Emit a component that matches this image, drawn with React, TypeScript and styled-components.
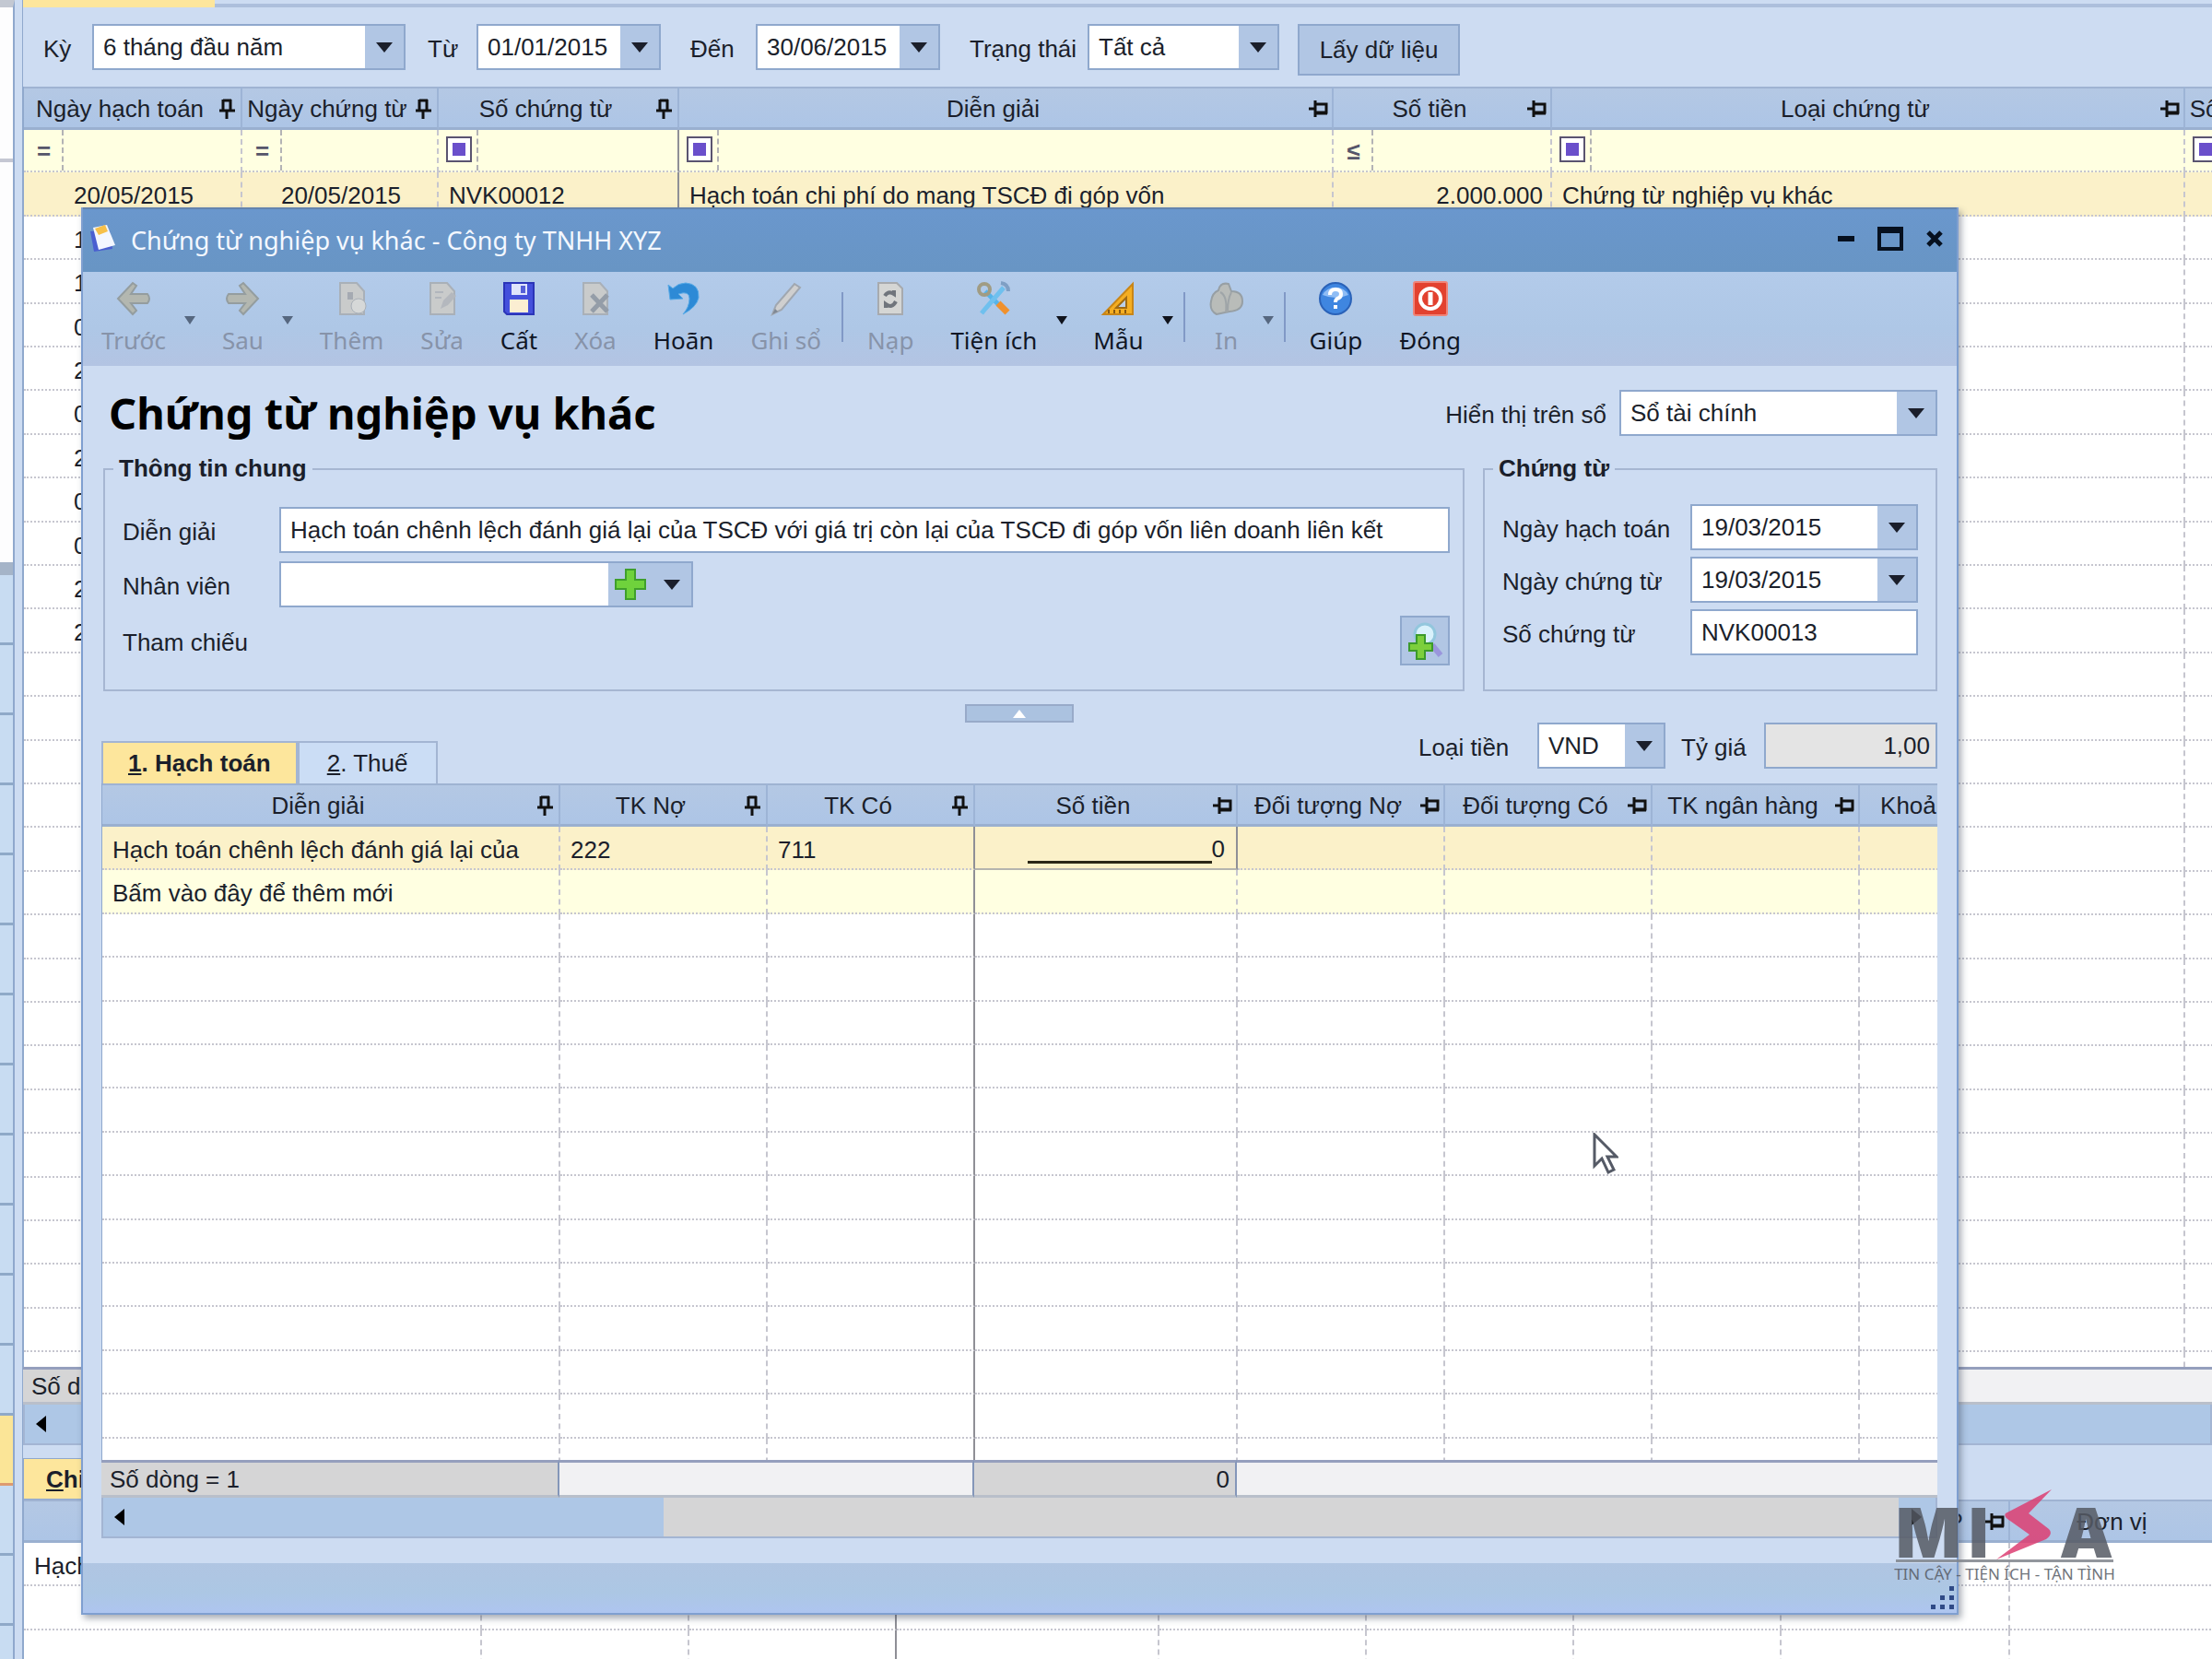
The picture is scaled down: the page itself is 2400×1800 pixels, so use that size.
import React from "react";
import styled, { createGlobalStyle, css } from "styled-components";

const c = {
  panel: "#cddcf2",
  line: "#8fa8cd",
  button: "#b1c6e4",
  tab: "#fde69c",
  selected: "#fbf1c9",
  entry: "#ffffe1",
  text: "#1b1f2b",
  grey: "#d5d5d6",
  dots: "#c6c6cf",
};

const sans = `"Liberation Sans", Arial, sans-serif`;
const ui = `"Noto Sans", "Open Sans", sans-serif`;

const Global = createGlobalStyle`
  * { box-sizing: border-box; }
  body { margin: 0; background: ${c.panel}; color: ${c.text}; font: 26px/28px ${sans}; }
  button, input, select { font: inherit; color: inherit; margin: 0; border-radius: 0; }
`;

/* ---------- page frame ---------- */

const Page = styled.div`
  position: relative;
  display: flex;
  height: 100vh;
  overflow: hidden;
`;

const Rail = styled.nav`
  width: 16px;
  margin-right: 8px;
  flex: none;
  display: flex;
  flex-direction: column;
  border-right: 2px solid ${c.line};
  border-top: 8px solid #c3c8d2;
  background: #fdfdfe;
`;

const RailList = styled.div`
  flex: 0 0 168px;
  border-bottom: 4px solid #c5c7d3;
`;

const RailSpace = styled.div`
  flex: 0 0 434px;
`;

const RailSplitter = styled.div`
  flex: 0 0 14px;
  background: #a5b4c8;
`;

const RailButton = styled.button<{ $active?: boolean }>`
  flex: 0 0 76px;
  padding: 0;
  border: 0;
  border-bottom: 3px solid ${(p) => (p.$active ? "#dd9a70" : "#8fa9c8")};
  background: ${(p) => (p.$active ? "#fbe597" : "#c8dcf2")};
`;

const Main = styled.main`
  flex: 1;
  min-width: 0;
  display: flex;
  flex-direction: column;
  border-left: 1px solid ${c.line};
`;

const TabStrip = styled.div`
  height: 8px;
  flex: none;
  display: flex;
`;

const TabStripActive = styled.div`
  width: 208px;
  background: ${c.tab};
`;

const TabStripRest = styled.div`
  flex: 1;
  border-bottom: 4px solid #adbfdc;
`;

const FilterBar = styled.form`
  flex: none;
  height: 86px;
  padding: 18px 22px 0;
  display: flex;
  align-items: flex-start;
`;

const FilterField = styled.div<{ $gap: number }>`
  display: flex;
  align-items: center;
  margin-left: ${(p) => p.$gap}px;
`;

const FieldLabel = styled.label<{ $w?: number }>`
  flex: none;
  width: ${(p) => (p.$w ? `${p.$w}px` : "auto")};
  padding-top: 3px;
  white-space: nowrap;
`;

const FetchButton = styled.button`
  height: 56px;
  width: 176px;
  margin-left: 20px;
  border: 2px solid ${c.line};
  background: ${c.button};
`;

/* ---------- inputs ---------- */

const ComboBox = styled.div<{ $w?: number }>`
  display: flex;
  height: 50px;
  width: ${(p) => (p.$w ? `${p.$w}px` : "100%")};
  border: 2px solid ${c.line};
  background: #fff;
`;

const fieldText = css`
  flex: 1;
  min-width: 0;
  padding: 0 10px;
  border: 0;
  outline: 0;
  background: transparent;
`;

const ComboSelect = styled.select`
  ${fieldText}
  appearance: none;
`;

const ComboInput = styled.input`
  ${fieldText}
`;

const ComboButton = styled.button`
  flex: none;
  width: 42px;
  padding: 0;
  border: 0;
  display: flex;
  align-items: center;
  justify-content: center;
  background: ${c.button};
`;

const AddButton = styled(ComboButton)`
  width: 48px;
`;

const TextField = styled.input<{ $w?: number; $locked?: boolean }>`
  height: 50px;
  width: ${(p) => (p.$w ? `${p.$w}px` : "100%")};
  padding: 0 ${(p) => (p.$locked ? 6 : 10)}px;
  border: 2px solid ${c.line};
  background: ${(p) => (p.$locked ? "#e4e4e4" : "#fff")};
  text-align: ${(p) => (p.$locked ? "right" : "left")};
`;

const Down = ({ small }: { small?: boolean }) => (
  <svg width={small ? 12 : 18} height={small ? 9 : 11} viewBox="0 0 18 11" preserveAspectRatio="none" aria-hidden>
    <path d="M0 0h18L9 11z" fill="currentColor" />
  </svg>
);

function SelectBox({ id, value, w }: { id: string; value: string; w?: number }) {
  return (
    <ComboBox $w={w}>
      <ComboSelect id={id} defaultValue={value}>
        <option>{value}</option>
      </ComboSelect>
      <ComboButton type="button" tabIndex={-1} aria-label="Mở danh sách"><Down /></ComboButton>
    </ComboBox>
  );
}

function DateBox({ id, value, w }: { id: string; value: string; w?: number }) {
  return (
    <ComboBox $w={w}>
      <ComboInput id={id} defaultValue={value} />
      <ComboButton type="button" aria-label="Chọn ngày"><Down /></ComboButton>
    </ComboBox>
  );
}

/* ---------- grids ---------- */

const GridArea = styled.div`
  flex: 1;
  min-height: 0;
  overflow: hidden;
  background: #fff;
  border-left: 1px solid ${c.line};
`;

const GridTable = styled.table<{ $w: number }>`
  width: ${(p) => p.$w}px;
  table-layout: fixed;
  border-collapse: separate;
  border-spacing: 0;
`;

const HeadCell = styled.th`
  height: 47px;
  padding: 2px 0 0;
  font-weight: normal;
  background: linear-gradient(#b4c8e4, #adc5e6);
  border-right: 2px solid #9db4d6;
  border-top: 2px solid #9fb3d2;
  border-bottom: 3px solid #9ab0d0;
`;

const HeadContent = styled.div`
  display: flex;
  align-items: center;
  padding-right: 3px;
  white-space: nowrap;
`;

const HeadLabel = styled.span`
  flex: 1;
  text-align: center;
`;

const Cell = styled.td<{ $align?: string; $wall?: boolean; $active?: boolean }>`
  padding: 4px 8px 0 11px;
  overflow: hidden;
  white-space: nowrap;
  text-align: ${(p) => p.$align ?? "left"};
  border-right: 2px ${(p) => (p.$wall || p.$active ? "solid #8f8f96" : `dashed ${c.dots}`)};
  border-bottom: 2px ${(p) => (p.$active ? "solid #b5b5ae" : `dotted ${c.dots}`)};
`;

const Row = styled.tr<{ $tone?: string }>`
  height: 47px;
  background: ${(p) => p.$tone ?? "#fff"};
  &:nth-child(5n + 2), &:nth-child(5n + 4) { height: 48px; }
`;

const FilterCell = styled.td<{ $wall?: boolean }>`
  height: 46px;
  padding: 0;
  background: ${c.entry};
  border-right: 2px ${(p) => (p.$wall ? "solid #8f8f96" : `dashed ${c.dots}`)};
  border-bottom: 2px dotted ${c.dots};
`;

const FilterSlot = styled.div`
  display: flex;
  height: 44px;
`;

const Operator = styled.button`
  flex: none;
  width: 43px;
  padding: 2px 0 0 2px;
  border: 0;
  border-right: 2px dashed #b3b3b5;
  background: transparent;
  font-weight: bold;
  color: #55556a;
`;

const FilterInput = styled.input`
  flex: 1;
  min-width: 0;
  border: 0;
  background: transparent;
`;

const SumCell = styled.td<{ $filled?: boolean; $line?: boolean; $wall?: boolean }>`
  height: 41px;
  padding: 0 6px 0 9px;
  overflow: hidden;
  white-space: nowrap;
  text-align: ${(p) => (p.$line ? "right" : "left")};
  background: ${(p) => (p.$filled ? c.grey : "#f1f1f3")};
  border-top: 3px solid #959fbd;
  border-bottom: 3px solid #b9bfca;
  border-right: ${(p) => (p.$filled || p.$wall ? "2px solid #8496b9" : "0")};
`;

const ScrollBar = styled.div`
  flex: none;
  display: flex;
  align-items: center;
  height: 44px;
  padding: 0 12px;
  background: #aec7e6;
  border: 2px solid #a3b5d3;
  border-top: 0;
`;

const ScrollButton = styled.button`
  padding: 0;
  width: 14px;
  border: 0;
  display: flex;
  background: transparent;
  color: #000;
`;

const ScrollTrack = styled.div`
  flex: 1;
  align-self: stretch;
  padding: 0 14px 0 582px;
`;

const ScrollThumb = styled.div`
  height: 100%;
  background: ${c.grey};
`;

const Pin = ({ side }: { side?: boolean }) => (
  <svg width="24" height="24" viewBox="0 0 24 24" fill="none" stroke="#111" aria-hidden>
    {side ? (
      <path d="M2 12h7M9 3v18M9 7h12v9H9M9 17h13" strokeWidth="3" />
    ) : (
      <path d="M8 2v11M8 3h9M16 2v11M4 14h17M12 14v9" strokeWidth="3" />
    )}
  </svg>
);

const Square = () => (
  <svg width="28" height="28" viewBox="0 0 28 28" aria-hidden>
    <rect x="1" y="1" width="26" height="26" fill="#fff" stroke="#5a5470" strokeWidth="2" />
    <rect x="7" y="7" width="14" height="14" fill="#6a4fcb" />
  </svg>
);

const LeftArrow = () => (
  <svg width="12" height="18" viewBox="0 0 12 18" aria-hidden><path d="M11 0v18L0 9z" fill="currentColor" /></svg>
);
const RightArrow = () => (
  <svg width="12" height="18" viewBox="0 0 12 18" aria-hidden><path d="M0 0v18l11-9z" fill="currentColor" /></svg>
);

type Col = { name: string; w: number; pinned?: boolean; wall?: boolean; op?: string };

const total = (cols: Col[]) => cols.reduce((sum, col) => sum + col.w, 0);

function Columns({ cols }: { cols: Col[] }) {
  return <colgroup>{cols.map((col) => <col key={col.name} width={col.w} />)}</colgroup>;
}

function Head({ cols }: { cols: Col[] }) {
  return (
    <thead>
      <tr>
        {cols.map((col) => (
          <HeadCell key={col.name} scope="col">
            <HeadContent>
              <HeadLabel>{col.name}</HeadLabel>
              <Pin side={!col.pinned} />
            </HeadContent>
          </HeadCell>
        ))}
      </tr>
    </thead>
  );
}

function EmptyRows({ cols, count }: { cols: Col[]; count: number }) {
  return (
    <>
      {Array.from({ length: count }, (_, i) => (
        <Row key={i}>{cols.map((col) => <Cell key={col.name} $wall={col.wall} />)}</Row>
      ))}
    </>
  );
}

/* ---------- voucher list ---------- */

const listCols: Col[] = [
  { name: "Ngày hạch toán", w: 237, pinned: true, op: "=" },
  { name: "Ngày chứng từ", w: 213, pinned: true, op: "=" },
  { name: "Số chứng từ", w: 261, pinned: true, wall: true, op: "box" },
  { name: "Diễn giải", w: 710, op: "box" },
  { name: "Số tiền", w: 237, op: "≤" },
  { name: "Loại chứng từ", w: 687, op: "box" },
  { name: "Số hóa đơn", w: 174, op: "box" },
];

const olderDates = [
  "19/03/2015", "19/03/2015", "05/03/2015", "28/02/2015", "05/02/2015",
  "28/01/2015", "05/01/2015", "05/01/2015", "20/01/2015", "20/01/2015",
];

function VoucherList() {
  return (
    <GridArea>
      <GridTable $w={total(listCols)}>
        <Columns cols={listCols} />
        <Head cols={listCols} />
        <tbody>
          <tr>
            {listCols.map((col) => (
              <FilterCell key={col.name} $wall={col.wall}>
                <FilterSlot>
                  <Operator type="button" aria-label={`Điều kiện lọc ${col.name}`}>
                    {col.op === "box" ? <Square /> : col.op}
                  </Operator>
                  <FilterInput aria-label={`Lọc ${col.name}`} />
                </FilterSlot>
              </FilterCell>
            ))}
          </tr>
          <Row $tone={c.selected}>
            <Cell $align="center">20/05/2015</Cell>
            <Cell $align="center">20/05/2015</Cell>
            <Cell $wall>NVK00012</Cell>
            <Cell>Hạch toán chi phí do mang TSCĐ đi góp vốn</Cell>
            <Cell $align="right">2.000.000</Cell>
            <Cell>Chứng từ nghiệp vụ khác</Cell>
            <Cell />
          </Row>
          {olderDates.map((date, i) => (
            <Row key={i}>
              <Cell $align="center">{date}</Cell>
              {listCols.slice(1).map((col) => <Cell key={col.name} $wall={col.wall} />)}
            </Row>
          ))}
          <EmptyRows cols={listCols} count={20} />
        </tbody>
      </GridTable>
    </GridArea>
  );
}

const Clip = styled.div`
  flex: none;
  overflow: hidden;
`;

/* ---------- detail pane ---------- */

const DetailPane = styled.section`
  flex: 0 0 232px;
  min-height: 0;
  padding-top: 14px;
  display: flex;
  flex-direction: column;
`;

const DetailTabs = styled.div`
  flex: none;
  height: 45px;
  display: flex;
`;

const DetailTab = styled.button`
  padding: 0 24px;
  border: 1px solid ${c.line};
  background: ${c.tab};
  font-weight: bold;
`;

const detailCols: Col[] = [
  { name: "Diễn giải", w: 497, pinned: true },
  { name: "TK Nợ", w: 225, pinned: true },
  { name: "TK Có", w: 225, pinned: true, wall: true },
  { name: "Số tiền", w: 285 },
  { name: "Đối tượng Nợ", w: 225 },
  { name: "Đối tượng Có", w: 225 },
  { name: "TK ngân hàng", w: 225 },
  { name: "Khoản mục CP", w: 248 },
  { name: "Đơn vị", w: 250 },
];

function Details() {
  return (
    <DetailPane>
      <DetailTabs>
        <DetailTab type="button"><u>C</u>hi tiết</DetailTab>
      </DetailTabs>
      <GridArea>
        <GridTable $w={total(detailCols)}>
          <Columns cols={detailCols} />
          <Head cols={detailCols} />
          <tbody>
            <Row>
              <Cell>Hạch toán chi phí do mang</Cell>
              {detailCols.slice(1).map((col) => <Cell key={col.name} $wall={col.wall} />)}
            </Row>
            <EmptyRows cols={detailCols} count={3} />
          </tbody>
        </GridTable>
      </GridArea>
    </DetailPane>
  );
}

/* ---------- dialog ---------- */

const Dialog = styled.section`
  position: absolute;
  inset: 225px 275px 48px 88px;
  display: flex;
  flex-direction: column;
  background: ${c.panel};
  border: 2px solid #7f9fd0;
  border-top: 0;
  box-shadow: 3px 4px 7px rgba(60, 70, 90, 0.45);
`;

const TitleBar = styled.header`
  flex: none;
  height: 70px;
  padding: 0 0 4px 6px;
  display: flex;
  align-items: center;
  background: linear-gradient(#6a97cd, #6895c4);
  border-top: 2px solid #6484ae;
`;

const TitleText = styled.span`
  flex: 1;
  padding: 4px 0 0 14px;
  color: #f4f8ff;
  font: 27px/36px ${ui};
`;

const WindowButton = styled.button`
  width: 48px;
  height: 40px;
  padding: 0;
  border: 0;
  display: flex;
  align-items: center;
  justify-content: center;
  background: transparent;
`;

const ToolBar = styled.div`
  flex: none;
  height: 102px;
  display: flex;
  background: linear-gradient(#b3cbea, #aec7e6 60%, #b3c4e3);
`;

const Tool = styled.button`
  padding: 10px 20px 0;
  border: 0;
  display: flex;
  flex-direction: column;
  align-items: center;
  gap: 8px;
  background: transparent;
  font: 26px/36px ${ui};
  white-space: nowrap;
  color: #101625;
  &:disabled { color: #8793a9; }
`;

const ToolMenu = styled.button`
  width: 21px;
  padding: 2px 8px 0 0;
  border: 0;
  display: flex;
  align-items: center;
  justify-content: center;
  background: transparent;
  color: #10131c;
  &:disabled { color: #56677f; }
`;

const ToolRule = styled.span`
  width: 2px;
  height: 54px;
  margin: 22px 6px 0 2px;
  background: #8199c6;
`;

const Body = styled.div`
  flex: 1;
  min-height: 0;
  padding: 26px 21px 27px 20px;
  display: flex;
  flex-direction: column;
`;

const TitleRow = styled.div`
  flex: none;
  display: flex;
  align-items: center;
  justify-content: space-between;
  gap: 12px;
`;

const Heading = styled.h1`
  margin: 0;
  padding-left: 8px;
  font: bold 47px/50px ${ui};
  color: #000;
`;

const Inline = styled.div`
  display: flex;
  align-items: center;
  gap: 14px;
`;

const Groups = styled.div`
  flex: none;
  display: grid;
  grid-template-columns: 1fr 493px;
  gap: 20px;
  padding: 22px 0 0 2px;
`;

const Group = styled.fieldset<{ $top: number }>`
  min-width: 0;
  height: 255px;
  margin: 0;
  padding: ${(p) => p.$top}px 14px 0 19px;
  border: 2px solid #a6b6d2;
`;

const Legend = styled.legend`
  margin-left: -10px;
  padding: 0 6px 2px;
  line-height: 26px;
  font-weight: bold;
`;

const GroupGrid = styled.div<{ $label: number; $gap: number }>`
  display: grid;
  grid-template-columns: ${(p) => p.$label}px 1fr;
  align-items: center;
  row-gap: ${(p) => p.$gap}px;
`;

const ReferenceButton = styled.button`
  justify-self: end;
  width: 54px;
  height: 54px;
  padding: 0;
  border: 2px solid ${c.line};
  display: flex;
  align-items: center;
  justify-content: center;
  background: ${c.button};
`;

const Collapse = styled.button`
  flex: none;
  align-self: center;
  width: 118px;
  height: 20px;
  margin-top: 14px;
  padding: 0;
  border: 2px solid #98aac9;
  display: flex;
  align-items: center;
  justify-content: center;
  background: #abc2e0;
`;

const TabRow = styled.div`
  flex: none;
  display: flex;
  justify-content: space-between;
  align-items: flex-end;
  height: 66px;
`;

const Tabs = styled.div`
  display: flex;
`;

const Tab = styled.button<{ $active?: boolean }>`
  height: 46px;
  min-width: 152px;
  padding: 0 27px;
  border: 2px solid #a3b5d3;
  border-bottom: 0;
  background: ${(p) => (p.$active ? c.tab : "#cbddf5")};
  font-weight: ${(p) => (p.$active ? "bold" : "normal")};
`;

const Currency = styled.div`
  align-self: flex-start;
  display: flex;
  align-items: center;
  gap: 17px;
`;

const ActiveValue = styled.div`
  display: flex;
  justify-content: flex-end;
`;

const MaskLine = styled.span`
  width: 200px;
  height: 30px;
  border-bottom: 3px solid #2b2717;
`;

const MaskDigit = styled.span`
  padding-right: 4px;
`;

const StatusBar = styled.footer`
  flex: none;
  height: 54px;
  display: flex;
  justify-content: flex-end;
  align-items: flex-end;
  padding: 0 2px 3px;
  background: linear-gradient(#b0c5e2, #acc7e4 60%, #aec5f0);
`;

const lineCols: Col[] = detailCols.slice(0, 8);

/* ---------- toolbar drawings ---------- */

const Ico = ({ children }: { children: React.ReactNode }) => (
  <svg width="38" height="38" viewBox="0 0 38 38" fill="none" aria-hidden>{children}</svg>
);

const paper = <path d="M6 2h18l8 9v25H6z" fill="#c9cbcb" stroke="#a9b0b8" strokeWidth="2" />;

const icons: Record<string, React.ReactNode> = {
  back: <Ico><path d="M2 19 18 2l4 3-6 9h18q4 5 0 10H16l6 8-4 4z" fill="#b3b7b0" stroke="#949d9f" strokeWidth="2" /></Ico>,
  next: <Ico><path d="M36 19 20 2l-4 3 6 9H4q-4 5 0 10h18l-6 8 4 4z" fill="#b3b7b0" stroke="#949d9f" strokeWidth="2" /></Ico>,
  add: <Ico>{paper}<path d="M14 12h6v8h-6z" fill="#a5aab2" /><circle cx="26" cy="27" r="8" fill="#d6d8d8" stroke="#a9b0b8" /></Ico>,
  edit: <Ico>{paper}<path d="M11 12h9M11 18h7" stroke="#b1b6bd" strokeWidth="2" /><path d="M17 30l3-9 9-9 5 4-9 10z" fill="#b4b8be" /></Ico>,
  save: (
    <Ico>
      <path d="M3 2h32v34H6l-3-3z" fill="#4450dc" stroke="#2b35b8" strokeWidth="2" />
      <path d="M11 3h17v12H11z" fill="#dfe4fb" /><path d="M21 5h5v8h-5z" fill="#5560d8" />
      <path d="M9 20h20v14H9z" fill="#fbeed2" />
    </Ico>
  ),
  remove: <Ico>{paper}<path d="m15 15 17 18M32 15 15 33" stroke="#949da8" strokeWidth="5" /></Ico>,
  undo: <Ico><path d="M2 4 4 20l14-1-5-5q12-4 12 5 0 9-7 17 15-8 17-18Q36 3 21 2 13 2 7 8z" fill="#2d8ad6" stroke="#56a9e6" /></Ico>,
  pencil: <Ico><path d="M4 36 8 26 28 3l6 4-20 24z" fill="#cfcfcf" stroke="#a0a7b0" strokeWidth="2" /><path d="m4 36 3-6 3 3z" fill="#7f8894" /></Ico>,
  reload: <Ico><path d="M6 2h20l6 6v28H6z" fill="#d5d6d4" stroke="#a7aaae" strokeWidth="2" /><path d="M13 16q4-6 10-2v-4M25 22q-4 8-11 3v4" stroke="#70757c" strokeWidth="4" /></Ico>,
  tools: (
    <Ico>
      <path d="m10 11 18 18" stroke="#56b4ea" strokeWidth="5" /><path d="m24 24 10 10" stroke="#f0912d" strokeWidth="7" />
      <path d="M30 7 10 30l-4 5" stroke="#6fc0ee" strokeWidth="5" /><path d="M27 2q8 1 8 9" stroke="#7f9fc4" strokeWidth="4" />
      <circle cx="9" cy="9" r="6" stroke="#a09c84" strokeWidth="4" />
    </Ico>
  ),
  ruler: <Ico><path d="M35 3v33H3z" fill="#f5ae22" stroke="#c98617" strokeWidth="2" /><path d="M28 18v11H17z" fill="#bcd0ea" stroke="#a06b14" strokeWidth="2" /><path d="M9 35v-4M15 35v-4M21 35v-4M27 35v-4" stroke="#8a5a10" strokeWidth="2" /></Ico>,
  print: <Ico><path d="M10 10q2-9 11-7l3 8q12 0 12 11 0 10-14 11L8 36q-8-4-6-14 1-9 8-12z" fill="#b9bcb9" stroke="#979fa4" strokeWidth="2" /><path d="M12 12q8 4 6 22M24 12q-4 8-4 20" stroke="#9fa5a8" strokeWidth="2" /></Ico>,
  help: (
    <Ico>
      <circle cx="19" cy="19" r="17" fill="#3f86e0" stroke="#2a62b8" strokeWidth="2" />
      <path d="M5 15a15 13 0 0 1 28 0q-14 6-28 0z" fill="#8fbdf5" />
      <path d="M13 15q0-6 6-6t6 5q0 4-4 5-2 1-2 4M19 26v4" stroke="#fff" strokeWidth="4" />
    </Ico>
  ),
  close: (
    <Ico>
      <rect x="1" y="1" width="36" height="36" rx="2" fill="#e2412f" stroke="#f08377" strokeWidth="2" />
      <circle cx="19" cy="19" r="11" stroke="#fff" strokeWidth="4" /><path d="M19 12v14" stroke="#fff" strokeWidth="5" />
    </Ico>
  ),
};

type ToolItem = { label: string; icon: string; off?: boolean; menu?: boolean; rule?: boolean };

const tools: ToolItem[] = [
  { label: "Trước", icon: "back", off: true, menu: true },
  { label: "Sau", icon: "next", off: true, menu: true },
  { label: "Thêm", icon: "add", off: true },
  { label: "Sửa", icon: "edit", off: true },
  { label: "Cất", icon: "save" },
  { label: "Xóa", icon: "remove", off: true },
  { label: "Hoãn", icon: "undo" },
  { label: "Ghi sổ", icon: "pencil", off: true, rule: true },
  { label: "Nạp", icon: "reload", off: true },
  { label: "Tiện ích", icon: "tools", menu: true },
  { label: "Mẫu", icon: "ruler", menu: true, rule: true },
  { label: "In", icon: "print", off: true, menu: true, rule: true },
  { label: "Giúp", icon: "help" },
  { label: "Đóng", icon: "close" },
];

const Plus = ({ size }: { size: number }) => (
  <svg width={size} height={size} viewBox="0 0 36 36" aria-hidden>
    <path d="M13 2h10v11h11v10H23v11H13V23H2V13h11z" fill="#6fd23c" stroke="#3f9f2c" strokeWidth="2" />
  </svg>
);

function EntryGrid() {
  return (
    <GridArea>
      <GridTable $w={total(lineCols)}>
        <Columns cols={lineCols} />
        <Head cols={lineCols} />
        <tbody>
          <Row $tone={c.selected}>
            <Cell>Hạch toán chênh lệch đánh giá lại của</Cell>
            <Cell>222</Cell>
            <Cell $wall>711</Cell>
            <Cell $active>
              <ActiveValue><MaskLine /><MaskDigit>0</MaskDigit></ActiveValue>
            </Cell>
            <Cell /><Cell /><Cell /><Cell />
          </Row>
          <Row $tone={c.entry}>
            <Cell>Bấm vào đây để thêm mới</Cell>
            {lineCols.slice(1).map((col) => <Cell key={col.name} $wall={col.wall} />)}
          </Row>
          <EmptyRows cols={lineCols} count={16} />
        </tbody>
      </GridTable>
    </GridArea>
  );
}

function VoucherDialog() {
  return (
    <Dialog role="dialog" aria-label="Chứng từ nghiệp vụ khác">
      <TitleBar>
        <svg width="32" height="36" viewBox="0 0 32 36" aria-hidden>
          <path d="M2 10 6 32l20-3-3-20z" fill="#4a5fd0" />
          <path d="M5 6 20 3l9 22-18 5z" fill="#f3f7ff" />
          <path d="m7 7 11-4 3 7-10 4z" fill="#f6c04a" />
        </svg>
        <TitleText>Chứng từ nghiệp vụ khác - Công ty TNHH XYZ</TitleText>
        <WindowButton aria-label="Thu nhỏ">
          <svg width="18" height="24" viewBox="0 0 18 24"><path d="M0 9h18v6H0z" fill="#06101f" /></svg>
        </WindowButton>
        <WindowButton aria-label="Phóng to">
          <svg width="28" height="26" viewBox="0 0 28 26"><path d="M2 2h24v22H2zM2 5h24" fill="none" stroke="#06101f" strokeWidth="4" /></svg>
        </WindowButton>
        <WindowButton aria-label="Đóng cửa sổ">
          <svg width="18" height="18" viewBox="0 0 18 18"><path d="m2 2 14 14M16 2 2 16" stroke="#06101f" strokeWidth="5" /></svg>
        </WindowButton>
      </TitleBar>

      <ToolBar role="toolbar">
        {tools.map((tool) => (
          <React.Fragment key={tool.label}>
            <Tool type="button" disabled={tool.off}>{icons[tool.icon]}{tool.label}</Tool>
            {tool.menu && (
              <ToolMenu type="button" disabled={tool.off} aria-label={`${tool.label}: thêm lựa chọn`}><Down small /></ToolMenu>
            )}
            {tool.rule && <ToolRule />}
          </React.Fragment>
        ))}
      </ToolBar>

      <Body>
        <TitleRow>
          <Heading>Chứng từ nghiệp vụ khác</Heading>
          <Inline>
            <FieldLabel htmlFor="book">Hiển thị trên sổ</FieldLabel>
            <SelectBox id="book" value="Sổ tài chính" w={345} />
          </Inline>
        </TitleRow>

        <Groups>
          <Group $top={27}>
            <Legend>Thông tin chung</Legend>
            <GroupGrid $label={170} $gap={9}>
              <FieldLabel htmlFor="memo">Diễn giải</FieldLabel>
              <TextField
                id="memo"
                defaultValue="Hạch toán chênh lệch đánh giá lại của TSCĐ với giá trị còn lại của TSCĐ đi góp vốn liên doanh liên kết"
              />
              <FieldLabel htmlFor="staff">Nhân viên</FieldLabel>
              <ComboBox $w={449}>
                <ComboInput id="staff" />
                <AddButton type="button" aria-label="Thêm nhân viên"><Plus size={36} /></AddButton>
                <ComboButton type="button" aria-label="Chọn nhân viên"><Down /></ComboButton>
              </ComboBox>
              <FieldLabel as="span">Tham chiếu</FieldLabel>
              <ReferenceButton type="button" aria-label="Chọn tham chiếu">
                <svg width="40" height="42" viewBox="0 0 40 42" aria-hidden>
                  <circle cx="20" cy="14" r="11" fill="#d9f1fb" stroke="#93c7dd" strokeWidth="3" />
                  <path d="m28 26 9 11" stroke="#9a96dc" strokeWidth="6" />
                  <path d="M11 15h9v9h8v8h-8v9h-9v-9H3v-8h8z" fill="#7ccf3c" stroke="#3c9a2b" strokeWidth="2" />
                </svg>
              </ReferenceButton>
            </GroupGrid>
          </Group>
          <Group $top={24}>
            <Legend>Chứng từ</Legend>
            <GroupGrid $label={204} $gap={7}>
              <FieldLabel htmlFor="posted">Ngày hạch toán</FieldLabel>
              <DateBox id="posted" value="19/03/2015" w={247} />
              <FieldLabel htmlFor="issued">Ngày chứng từ</FieldLabel>
              <DateBox id="issued" value="19/03/2015" w={247} />
              <FieldLabel htmlFor="number">Số chứng từ</FieldLabel>
              <TextField id="number" defaultValue="NVK00013" $w={247} />
            </GroupGrid>
          </Group>
        </Groups>

        <Collapse type="button" aria-label="Thu gọn">
          <svg width="14" height="9" viewBox="0 0 14 9"><path d="M0 9h14L7 0z" fill="#fff" /></svg>
        </Collapse>

        <TabRow>
          <Tabs role="tablist">
            <Tab type="button" role="tab" aria-selected $active><u>1</u>. Hạch toán</Tab>
            <Tab type="button" role="tab" aria-selected={false}><u>2</u>. Thuế</Tab>
          </Tabs>
          <Currency>
            <FieldLabel htmlFor="currency" $w={112}>Loại tiền</FieldLabel>
            <SelectBox id="currency" value="VND" w={139} />
            <FieldLabel htmlFor="rate" $w={73}>Tỷ giá</FieldLabel>
            <TextField id="rate" defaultValue="1,00" $w={188} $locked readOnly />
          </Currency>
        </TabRow>

        <EntryGrid />
        <Clip>
          <GridTable $w={total(lineCols)}>
            <Columns cols={lineCols} />
            <tbody>
              <tr>
                <SumCell $filled>Số dòng = 1</SumCell>
                <SumCell /><SumCell $wall />
                <SumCell $filled $line>0</SumCell>
                <SumCell /><SumCell /><SumCell /><SumCell />
              </tr>
            </tbody>
          </GridTable>
        </Clip>
        <ScrollBar>
          <ScrollButton type="button" aria-label="Cuộn trái"><LeftArrow /></ScrollButton>
          <ScrollTrack><ScrollThumb /></ScrollTrack>
          <ScrollButton type="button" aria-label="Cuộn phải"><RightArrow /></ScrollButton>
        </ScrollBar>
      </Body>

      <StatusBar>
        <svg width="26" height="26" viewBox="0 0 26 26" fill="#2f4a86" aria-hidden>
          <path d="M20 0h5v5h-5zM10 10h5v5h-5zM20 10h5v5h-5zM0 20h5v5H0zM10 20h5v5h-5zM20 20h5v5h-5z" />
        </svg>
      </StatusBar>
    </Dialog>
  );
}

/* ---------- watermark and pointer ---------- */

const Watermark = styled.div`
  position: absolute;
  right: 107px;
  bottom: 82px;
  width: 236px;
  color: #565b65;
  opacity: 0.85;
`;

const Mark = styled.div`
  display: flex;
  align-items: flex-end;
  justify-content: space-between;
  font: 900 74px/58px "Inter", "Open Sans", sans-serif;
  height: 70px;
`;

const Slogan = styled.div`
  display: flex;
  justify-content: center;
  border-top: 3px solid #80848c;
  padding-top: 3px;
  font: 17px/20px ${ui};
  white-space: nowrap;
`;

const Pointer = styled.svg`
  position: absolute;
  left: 1728px;
  top: 1229px;
`;

export default function App() {
  return (
    <Page>
      <Global />
      <Rail aria-label="Phân hệ">
        <RailList />
        <RailSpace />
        <RailSplitter />
        {Array.from({ length: 16 }, (_, i) => (
          <RailButton key={i} type="button" $active={i === 12} aria-label={`Phân hệ ${i + 1}`} />
        ))}
      </Rail>
      <Main>
        <TabStrip><TabStripActive /><TabStripRest /></TabStrip>
        <FilterBar onSubmit={(e) => e.preventDefault()}>
          <FilterField $gap={0}>
            <FieldLabel htmlFor="period" $w={53}>Kỳ</FieldLabel>
            <SelectBox id="period" value="6 tháng đầu năm" w={340} />
          </FilterField>
          <FilterField $gap={24}>
            <FieldLabel htmlFor="from" $w={53}>Từ</FieldLabel>
            <DateBox id="from" value="01/01/2015" w={200} />
          </FilterField>
          <FilterField $gap={32}>
            <FieldLabel htmlFor="to" $w={71}>Đến</FieldLabel>
            <DateBox id="to" value="30/06/2015" w={200} />
          </FilterField>
          <FilterField $gap={32}>
            <FieldLabel htmlFor="state" $w={128}>Trạng thái</FieldLabel>
            <SelectBox id="state" value="Tất cả" w={208} />
          </FilterField>
          <FetchButton type="submit">Lấy dữ liệu</FetchButton>
        </FilterBar>
        <VoucherList />
        <Clip>
          <GridTable $w={total(listCols)}>
            <Columns cols={listCols} />
            <tbody>
              <tr>
                <SumCell $filled>Số dòng = 11</SumCell>
                {listCols.slice(1).map((col) => <SumCell key={col.name} />)}
              </tr>
            </tbody>
          </GridTable>
        </Clip>
        <ScrollBar>
          <ScrollButton type="button" aria-label="Cuộn danh sách"><LeftArrow /></ScrollButton>
        </ScrollBar>
        <Details />
      </Main>
      <VoucherDialog />
      <Watermark>
        <Mark>
          <span>M</span>
          <span>I</span>
          <svg width="60" height="76" viewBox="0 0 60 76" role="img" aria-label="S">
            <path d="M60 0 10 26q-2 3 2 6l24 17L0 76l54-22q8-6 3-11L35 26z" fill="#dd3f73" />
          </svg>
          <span>A</span>
        </Mark>
        <Slogan>TIN CẬY - TIỆN ÍCH - TẬN TÌNH</Slogan>
      </Watermark>
      <Pointer width="28" height="46" viewBox="0 0 28 46" aria-hidden>
        <path d="M2 2v34l8-8 7 15 6-3-7-14h10z" fill="#fff" stroke="#555a66" strokeWidth="3" />
      </Pointer>
    </Page>
  );
}
